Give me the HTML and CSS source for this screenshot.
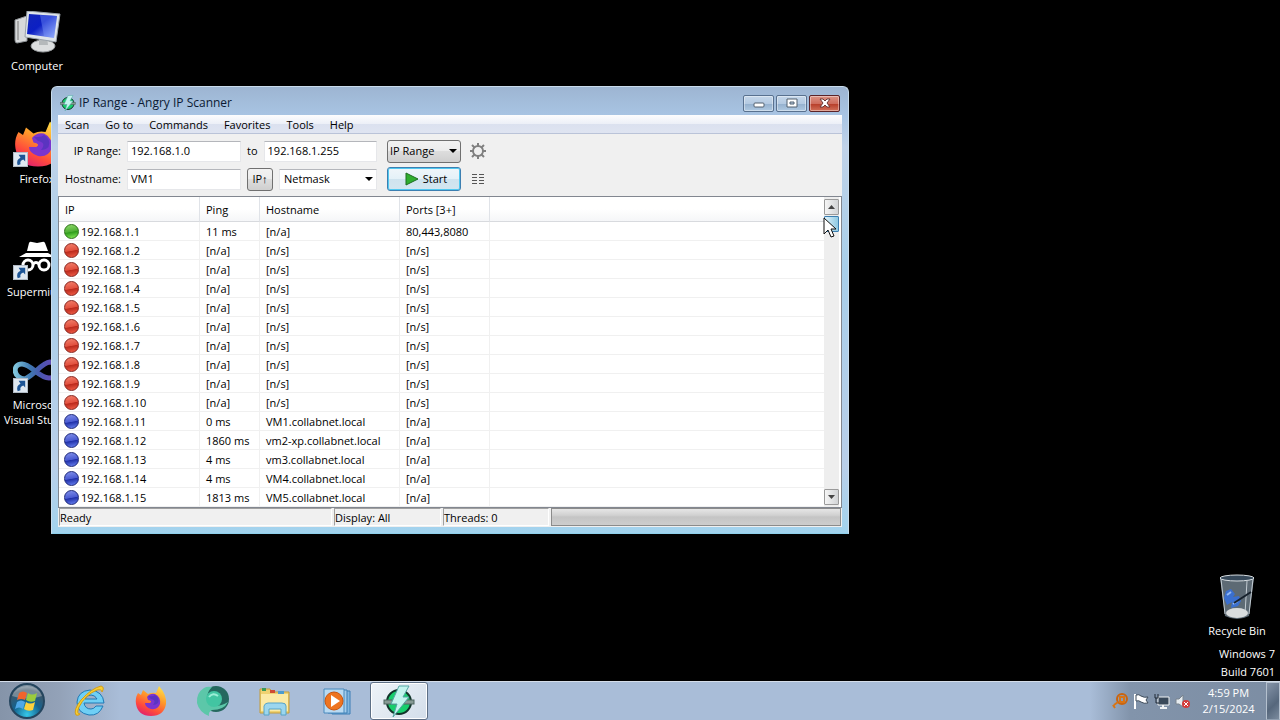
FILE: index.html
```
<!DOCTYPE html>
<html lang="en">
  <head>
    <meta charset="UTF-8" />
    <meta name="viewport" content="width=device-width, initial-scale=1.0" />
    <title>Desktop</title>
    <link rel="stylesheet" href="styles.css">
  </head>
  <body>
    <!-- shared icon shapes -->
    <svg class="defs" width="0" height="0">
      <defs>
        <linearGradient id="ffOuter" x1="0.8" y1="0" x2="0.3" y2="1">
          <stop offset="0" stop-color="#ffe14a" />
          <stop offset="0.4" stop-color="#ff9a2a" />
          <stop offset="0.75" stop-color="#ff4a3c" />
          <stop offset="1" stop-color="#e0206e" />
        </linearGradient>
        <linearGradient id="blueScreen" x1="0" y1="0" x2="1" y2="1">
          <stop offset="0" stop-color="#1226b8" />
          <stop offset="0.45" stop-color="#0b1fc4" />
          <stop offset="1" stop-color="#a8c0ff" />
        </linearGradient>
        <linearGradient id="infinity" x1="0" y1="0" x2="1" y2="0">
          <stop offset="0" stop-color="#7fc4dc" />
          <stop offset="0.35" stop-color="#3f78b0" />
          <stop offset="0.6" stop-color="#4a56b0" />
          <stop offset="1" stop-color="#7048b8" />
        </linearGradient>
        <radialGradient id="orb" cx="0.5" cy="0.9" r="0.9">
          <stop offset="0" stop-color="#35c8e8" />
          <stop offset="0.45" stop-color="#14628e" />
          <stop offset="0.8" stop-color="#3f5668" />
          <stop offset="1" stop-color="#8fa3b2" />
        </radialGradient>
        <symbol id="firefox" viewBox="0 0 32 32">
          <path d="M3 8 L6 10 L8 5 L13 9 Q17 7 21 8 L24 1 Q32 10 31 19 Q29 31 16 31 Q3 31 1 19 Q0 13 3 8z" fill="url(#ffOuter)" />
          <path d="M12 12 Q15 8 20 9 Q26 12 25 19 Q23 25 16 24 Q10 22 10 18 L15 18 Q18 16 13 15z" fill="#7a35cf" />
          <path d="M13 11 Q18 12 20 10 Q25 13 23 18 Q21 20 18 20 Q22 15 16 14z" fill="#5a34c0" />
        </symbol>
        <symbol id="shortcut" viewBox="0 0 16 16">
          <rect x="0.5" y="0.5" width="15" height="15" fill="#dfe8f1" stroke="#b5bec9" />
          <path d="M5 14 Q3 8 8 6 L6 3 L13 3 L13 10 L11 8 Q7 9 8 13z" fill="#1d5596" />
        </symbol>
        <symbol id="angry" viewBox="0 0 32 32">
          <circle cx="16" cy="17" r="12" fill="#17cf6c" stroke="#12342a" stroke-width="2" />
          <rect x="1" y="15" width="30" height="4" fill="#879a94" stroke="#4e6660" stroke-width="1" />
          <path d="M16 1 L26 1 L20 12 L26 12 L10 32 L14 19 L8 19z" fill="#c3f4ee" stroke="#55a7a4" stroke-width="1" />
        </symbol>
      </defs>
    </svg>

    <main class="desktop">
      <a href="#" class="shortcut computer">
        <svg width="48" height="44" viewBox="0 0 48 44">
          <path d="M2 9 L14 5 V30 L4 32 Q2 32 2 29z" fill="#d7d9da" stroke="#8e9296" />
          <path d="M5 10 V29" stroke="#777" />
          <ellipse cx="30" cy="35" rx="12" ry="6" fill="#dcdedf" stroke="#989c9f" />
          <path d="M26 25 H34 L35 34 H26z" fill="#b5b9bb" />
          <path d="M14 0 L47 3 L43 31 L12 26z" fill="#dfe5ea" stroke="#9aa2aa" />
          <path d="M16 3 L44 5 L41 27 L14 23z" fill="url(#blueScreen)" />
          <path d="M27 4 L44 5 L41 27 L31 25z" fill="#7c9cff" opacity="0.4" />
        </svg>
        <span>Computer</span>
      </a>
      <a href="#" class="shortcut firefox">
        <svg width="48" height="48" viewBox="0 0 48 48">
          <use href="#firefox" x="1" y="0" width="48" height="48" />
          <use href="#shortcut" x="0" y="32" width="15" height="15" />
        </svg>
        <span>Firefox</span>
      </a>
      <a href="#" class="shortcut supermium">
        <svg width="48" height="48" viewBox="0 0 48 48">
          <path d="M16 10 Q17 8 19 9 L24 10 L29 9 Q31 8 32 10 L35 18 H14z" fill="#fff" />
          <path d="M6 24 L13 20 H35 L42 24z" fill="#fff" />
          <circle cx="15" cy="32" r="5" fill="none" stroke="#fff" stroke-width="3" />
          <circle cx="31" cy="32" r="5" fill="none" stroke="#fff" stroke-width="3" />
          <path d="M20 31 Q23 28 26 31" fill="none" stroke="#fff" stroke-width="3" />
          <use href="#shortcut" x="0" y="32" width="15" height="15" />
        </svg>
        <span>Supermium</span>
      </a>
      <a href="#" class="shortcut studio">
        <svg width="48" height="48" viewBox="0 0 48 48">
          <path d="M12 33 C0 32 -1 18 9 18 C18 18 26 32 36 32 C48 32 48 16 37 16 C28 17 23 28 12 33z" fill="none" stroke="url(#infinity)" stroke-width="5" />
          <use href="#shortcut" x="0" y="32" width="15" height="15" />
        </svg>
        <span>Microsoft Visual Studio</span>
      </a>

      <a href="#" class="shortcut recycle">
        <svg width="38" height="46" viewBox="0 0 38 46">
          <path d="M2 4 L7 42 Q19 48 31 42 L36 4z" fill="#6d7c88" opacity="0.85" />
          <path d="M3 5 L7 40 M35 5 L31 40 M29 7 L27 40" stroke="#c3ccd3" stroke-width="1" />
          <ellipse cx="19" cy="4" rx="17" ry="3" fill="#37495a" stroke="#d6dce0" stroke-width="1" />
          <path d="M6 24 L8 17 L13 15 L17 20 L15 23 L21 22 L23 27 L20 32 L13 34 L14 28 L9 31z" fill="#3a6fcf" />
          <path d="M9 21 L13 18 M15 30 L20 27" stroke="#91b8f6" stroke-width="2" />
          <path d="M16 29 L33 18" stroke="#17212c" stroke-width="2" />
          <ellipse cx="19" cy="39" rx="11" ry="5" fill="#d9dcdd" />
        </svg>
        <span>Recycle Bin</span>
      </a>
      <p class="build">Windows 7<br>Build 7601</p>

      <section class="window">
        <header class="titlebar">
          <svg width="16" height="16"><use href="#angry" width="16" height="16" /></svg>
          <h1>IP Range - Angry IP Scanner</h1>
          <div class="controls">
            <button aria-label="Minimize">
              <svg width="12" height="10"><rect x="1" y="5" width="10" height="4" rx="1" fill="#fff" stroke="#52606f" /></svg>
            </button>
            <button aria-label="Maximize">
              <svg width="12" height="10"><path d="M1 1 H11 V9 H1z M4 4 V6 H8 V4z" fill="#fff" fill-rule="evenodd" stroke="#52606f" /></svg>
            </button>
            <button class="close" aria-label="Close">
              <svg width="12" height="10"><path d="M1 1 H4 L6 3 L8 1 H11 L8 5 L11 9 H8 L6 7 L4 9 H1 L4 5z" fill="#fff" stroke="#6b3a38" /></svg>
            </button>
          </div>
        </header>

        <div class="client">
          <nav class="menubar">
            <a href="#">Scan</a>
            <a href="#">Go to</a>
            <a href="#">Commands</a>
            <a href="#">Favorites</a>
            <a href="#">Tools</a>
            <a href="#">Help</a>
          </nav>

          <form class="toolbar">
            <label for="start-ip">IP Range:</label>
            <input id="start-ip" type="text" value="192.168.1.0">
            <div class="group">
              <label for="end-ip">to</label>
              <input id="end-ip" type="text" value="192.168.1.255">
            </div>
            <div class="select feeder">
              <select aria-label="Feeder"><option>IP Range</option></select>
            </div>
            <button type="button" class="tool" aria-label="Preferences">
              <svg width="18" height="18" viewBox="0 0 18 18">
                <g stroke="#808080" fill="none">
                  <circle cx="9" cy="9" r="5" stroke-width="2" />
                  <path d="M9 1 V4 M9 14 V17 M1 9 H4 M14 9 H17 M3 3 L6 6 M12 12 L15 15 M15 3 L12 6 M3 15 L6 12" stroke-width="2" />
                </g>
              </svg>
            </button>

            <label for="hostname">Hostname:</label>
            <input id="hostname" type="text" value="VM1">
            <div class="group">
              <button type="button" class="ip-up">IP↑</button>
              <div class="select netmask">
                <select aria-label="Netmask"><option>Netmask</option></select>
              </div>
            </div>
            <button type="button" class="start">
              <svg width="14" height="14" viewBox="0 0 14 14"><path d="M1 1 L13 7 L1 13z" fill="#2fae2f" stroke="#1d6e22" /></svg>
              Start
            </button>
            <button type="button" class="tool" aria-label="Select fetchers">
              <svg width="12" height="12" viewBox="0 0 12 12">
                <path d="M0 1.5 H5 M7 1.5 H12 M0 4.5 H5 M7 4.5 H12 M0 7.5 H5 M7 7.5 H12 M0 10.5 H5 M7 10.5 H12" stroke="#555" />
              </svg>
            </button>
          </form>

          <div class="results">
            <table>
              <colgroup>
                <col class="col-ip"><col class="col-ping"><col class="col-host"><col class="col-ports"><col>
              </colgroup>
              <thead>
                <tr><th>IP</th><th>Ping</th><th>Hostname</th><th>Ports [3+]</th><th></th></tr>
              </thead>
              <tbody>
                <tr><td><i class="dot green"></i>192.168.1.1</td><td>11 ms</td><td>[n/a]</td><td>80,443,8080</td><td></td></tr>
                <tr><td><i class="dot red"></i>192.168.1.2</td><td>[n/a]</td><td>[n/s]</td><td>[n/s]</td><td></td></tr>
                <tr><td><i class="dot red"></i>192.168.1.3</td><td>[n/a]</td><td>[n/s]</td><td>[n/s]</td><td></td></tr>
                <tr><td><i class="dot red"></i>192.168.1.4</td><td>[n/a]</td><td>[n/s]</td><td>[n/s]</td><td></td></tr>
                <tr><td><i class="dot red"></i>192.168.1.5</td><td>[n/a]</td><td>[n/s]</td><td>[n/s]</td><td></td></tr>
                <tr><td><i class="dot red"></i>192.168.1.6</td><td>[n/a]</td><td>[n/s]</td><td>[n/s]</td><td></td></tr>
                <tr><td><i class="dot red"></i>192.168.1.7</td><td>[n/a]</td><td>[n/s]</td><td>[n/s]</td><td></td></tr>
                <tr><td><i class="dot red"></i>192.168.1.8</td><td>[n/a]</td><td>[n/s]</td><td>[n/s]</td><td></td></tr>
                <tr><td><i class="dot red"></i>192.168.1.9</td><td>[n/a]</td><td>[n/s]</td><td>[n/s]</td><td></td></tr>
                <tr><td><i class="dot red"></i>192.168.1.10</td><td>[n/a]</td><td>[n/s]</td><td>[n/s]</td><td></td></tr>
                <tr><td><i class="dot blue"></i>192.168.1.11</td><td>0 ms</td><td>VM1.collabnet.local</td><td>[n/a]</td><td></td></tr>
                <tr><td><i class="dot blue"></i>192.168.1.12</td><td>1860 ms</td><td>vm2-xp.collabnet.local</td><td>[n/a]</td><td></td></tr>
                <tr><td><i class="dot blue"></i>192.168.1.13</td><td>4 ms</td><td>vm3.collabnet.local</td><td>[n/a]</td><td></td></tr>
                <tr><td><i class="dot blue"></i>192.168.1.14</td><td>4 ms</td><td>VM4.collabnet.local</td><td>[n/a]</td><td></td></tr>
                <tr><td><i class="dot blue"></i>192.168.1.15</td><td>1813 ms</td><td>VM5.collabnet.local</td><td>[n/a]</td><td></td></tr>
              </tbody>
            </table>
            <div class="scrollbar">
              <button aria-label="Scroll up"><svg width="7" height="4"><path d="M0 4 L3.5 0 L7 4z" fill="#444" /></svg></button>
              <div class="thumb"></div>
              <button aria-label="Scroll down"><svg width="7" height="4"><path d="M0 0 L3.5 4 L7 0z" fill="#444" /></svg></button>
            </div>
          </div>

          <footer class="statusbar">
            <span class="ready">Ready</span>
            <span class="display">Display: All</span>
            <span class="threads">Threads: 0</span>
            <div class="progress"></div>
          </footer>
        </div>
      </section>

      <svg class="pointer" width="14" height="21" viewBox="0 0 14 21">
        <path d="M1 1 V17 L5 13 L8 20 L11 19 L8 12 H13z" fill="#fff" stroke="#111" />
      </svg>
    </main>

    <footer class="taskbar">
      <button class="orb" aria-label="Start menu">
        <svg width="38" height="38" viewBox="0 0 38 38">
          <circle cx="19" cy="19" r="17" fill="url(#orb)" stroke="#24455e" stroke-width="2" />
          <path d="M4 14 Q8 4 19 4 Q30 4 34 14 Q19 19 4 14z" fill="#fff" opacity="0.3" />
          <path d="M11 11 Q15 8 19 11 L17 18 Q13 16 9 18z" fill="#f0642c" />
          <path d="M20 11 Q24 14 29 11 L27 19 Q22 21 18 18z" fill="#9bcb3c" />
          <path d="M9 20 Q13 17 17 20 L15 27 Q11 24 7 27z" fill="#4fa8e8" />
          <path d="M18 20 Q22 23 27 20 L25 28 Q20 30 16 27z" fill="#fcd13c" />
        </svg>
      </button>
      <button class="task" aria-label="Internet Explorer">
        <svg width="32" height="32" viewBox="0 0 32 32">
          <path d="M30 21 Q26 31 16 30 Q4 28 4 17 Q5 6 17 5 Q30 6 31 18 H11 Q12 24 18 24 Q21 24 23 21z M12 14 H24 Q22 10 18 10 Q13 10 12 14z" fill="#6fcff5" fill-rule="evenodd" stroke="#2079b5" />
          <path d="M3 30 Q0 25 8 15 Q19 3 28 1 Q32 2 29 7 Q29 4 24 5 Q12 10 6 22 Q3 29 7 29 Q5 31 3 30z" fill="#f7ce33" stroke="#d39e17" stroke-width="1" />
        </svg>
      </button>
      <button class="task" aria-label="Firefox">
        <svg width="32" height="32"><use href="#firefox" width="32" height="32" /></svg>
      </button>
      <button class="task" aria-label="Supermium">
        <svg width="34" height="32" viewBox="0 0 34 32">
          <ellipse cx="20" cy="14" rx="13" ry="13" fill="#25685f" />
          <path d="M8 3 Q0 8 1 18 Q3 27 13 31 Q12 27 16 25 Q28 25 32 17 Q26 21 18 21 Q10 19 11 13 Q11 7 16 2 Q11 1 8 3z" fill="#5cc7a9" />
          <circle cx="18" cy="14" r="8" fill="#42c5a2" />
          <path d="M13 12 Q17 7 22 11" stroke="#9beed6" stroke-width="2" fill="none" />
        </svg>
      </button>
      <button class="task" aria-label="Windows Explorer">
        <svg width="34" height="32" viewBox="0 0 34 32">
          <path d="M2 4 H12 L14 7 H31 V28 H2z" fill="#efd271" stroke="#c29b3b" />
          <path d="M3 9 H30 V26 H3z" fill="#fbeaa5" />
          <path d="M4 3 H8 V6 H4z" fill="#3c9a58" />
          <path d="M12 5 H17 V8 H12z" fill="#cf4a33" />
          <path d="M20 6 H26 V9 H20z" fill="#4b9bd0" />
          <path d="M6 30 V21 Q7 18 10 18 H24 Q28 18 28 21 V30 H23 V24 H11 V30z" fill="#9bd6ee" stroke="#57a4c8" />
        </svg>
      </button>
      <button class="task" aria-label="Windows Media Player">
        <svg width="28" height="28" viewBox="0 0 28 28">
          <path d="M9 4 H27 V27 H9z" fill="#82b6df" stroke="#3d7eb5" />
          <path d="M5 3 H24 V26 H5z" fill="#a3cceb" stroke="#3d7eb5" />
          <path d="M1 2 H21 V26 H1z" fill="#b9daf2" stroke="#4889bd" />
          <circle cx="11" cy="14" r="9" fill="#ee7420" stroke="#c9550f" />
          <path d="M8 8 L17 14 L8 20z" fill="#fff" />
        </svg>
      </button>
      <button class="task active" aria-label="Angry IP Scanner">
        <svg width="32" height="32"><use href="#angry" width="32" height="32" /></svg>
      </button>

      <div class="tray">
        <svg width="16" height="16" viewBox="0 0 16 16">
          <circle cx="10" cy="6" r="5" fill="none" stroke="#c9640f" stroke-width="2" />
          <path d="M6 9 L2 12 M1 12 L3 15 M8 4 H12 V9 H8z" stroke="#d97414" stroke-width="2" fill="none" />
        </svg>
        <svg width="16" height="16" viewBox="0 0 16 16">
          <path d="M2 1 V16" stroke="#fff" stroke-width="2" />
          <path d="M3 2 Q6 1 8 3 Q11 5 15 4 L13 7 L15 10 Q11 11 8 9 Q6 7 3 8z" fill="#fff" stroke="#3e4c5b" stroke-width="1" />
        </svg>
        <svg width="16" height="16" viewBox="0 0 16 16">
          <path d="M4 4 H15 V12 H4z" fill="#39495a" stroke="#f0f3f5" />
          <path d="M6 15 H13 M9 12 V15" stroke="#f0f3f5" stroke-width="2" />
          <path d="M1 1 V5 H4 V1 M2 5 V10 H5" fill="none" stroke="#1e2935" />
        </svg>
        <svg width="16" height="16" viewBox="0 0 16 16">
          <path d="M1 6 H4 L8 2 V14 L4 11 H1z" fill="#e6ebef" stroke="#79838d" />
          <circle cx="11" cy="11" r="4" fill="#d43c3c" />
          <path d="M9 9 L13 13 M13 9 L9 13" stroke="#fff" />
        </svg>
      </div>
      <p class="clock">4:59 PM<br>2/15/2024</p>
      <button class="peek" aria-label="Show desktop"></button>
    </footer>
  </body>
</html>
```
FILE: styles.css
```
* {
  margin: 0;
  padding: 0;
  box-sizing: border-box;
}

body {
  display: flex;
  flex-direction: column;
  min-height: 100vh;
  background: #000;
  color: #000;
  font-family: "Open Sans", "Noto Sans", sans-serif;
  font-size: 11px;
  line-height: 16px;
}

button,
input,
select {
  font: inherit;
  color: inherit;
}

a {
  color: inherit;
  text-decoration: none;
}

svg {
  display: block;
  flex-shrink: 0;
}

.defs {
  position: absolute;
}

.desktop {
  position: relative;
  flex: 1;
  overflow: hidden;
}

/* desktop icons */
.shortcut {
  position: absolute;
  left: 0;
  width: 74px;
  display: flex;
  flex-direction: column;
  align-items: center;
  gap: 3px;
  color: #fff;
  text-align: center;
  line-height: 15px;
}

.computer {
  top: 11px;
}

.firefox {
  top: 120px;
}

.supermium {
  top: 233px;
}

.studio {
  top: 346px;
}

.recycle {
  top: 574px;
  left: auto;
  right: 6px;
}

.build {
  position: absolute;
  right: 5px;
  bottom: 0;
  color: #fff;
  text-align: right;
  line-height: 18px;
}

/* window */
.window {
  position: absolute;
  left: 51px;
  top: 86px;
  width: 798px;
  padding: 0 6px 6px;
  border: 1px solid #c9dcec;
  border-bottom-color: #8fd0ec;
  border-radius: 6px 6px 0 0;
  background: linear-gradient(#9db5d2, #a9c5e4 30px, #c0d2e8 60px, #a8cfea 180px, #b9cfe9 380px, #a2d3ee);
}

.titlebar {
  display: flex;
  align-items: center;
  gap: 3px;
  height: 28px;
  padding: 4px 2px 0;
  color: #0b1a33;
}

.titlebar h1 {
  flex: 1;
  font-size: 12px;
  font-weight: normal;
}

.controls {
  display: flex;
  gap: 2px;
}

.controls button {
  display: flex;
  align-items: center;
  justify-content: center;
  width: 31px;
  height: 17px;
  border: 1px solid #59718f;
  border-radius: 2px;
  background: linear-gradient(#c5d7ea, #b4cae2 50%, #93afcd 50%, #afc9e2);
  box-shadow: inset 0 0 0 1px rgba(255, 255, 255, 0.4);
}

.controls .close {
  border-color: #5b2328;
  background: linear-gradient(#dc9385, #cf6d5d 50%, #b53a26 50%, #d2715a);
}

.client {
  background: #f0f0f0;
}

.menubar {
  display: flex;
  gap: 16px;
  height: 19px;
  padding: 0 7px;
  line-height: 19px;
  border-bottom: 1px solid #bac3d8;
  background: linear-gradient(#fdfdfe, #eceff7 50%, #dbe1ef 50%, #dfe4f1);
}

.toolbar {
  display: grid;
  grid-template-columns: 58px 114px 130px 78px 22px;
  grid-template-rows: 24px 24px;
  gap: 4px 6px;
  align-items: center;
  padding: 5px;
}

.toolbar > label {
  text-align: right;
}

.toolbar input,
.netmask select {
  width: 100%;
  height: 21px;
  padding: 0 4px 1px;
  border: 1px solid #e6e7ea;
  border-top-color: #b4b6bb;
  background: #fff;
}

.toolbar input {
  padding-left: 3px;
}

.group {
  display: flex;
  align-items: center;
  gap: 6px;
}

.group .select,
.group input {
  flex: 1;
  min-width: 0;
}

.select {
  position: relative;
}

.select select {
  appearance: none;
  display: block;
  width: 100%;
}

.select::after {
  content: "";
  position: absolute;
  right: 4px;
  top: 50%;
  border: 4px solid transparent;
  border-top-color: #000;
  border-bottom: 0;
  transform: translateY(-50%);
  pointer-events: none;
}

.feeder {
  margin-left: 4px;
}

.feeder select,
.ip-up {
  height: 23px;
  border: 1px solid #707070;
  border-radius: 3px;
  background: linear-gradient(#f2f2f2, #ebebeb 50%, #dddddd 50%, #cfcfcf);
}

.feeder select {
  padding: 0 2px;
}

.ip-up {
  width: 26px;
}

.start {
  display: flex;
  align-items: center;
  justify-content: center;
  gap: 4px;
  height: 24px;
  margin-left: 4px;
  padding-left: 4px;
  border: 1px solid #3c7fb1;
  border-radius: 3px;
  background: linear-gradient(#f0f6fa, #e4f1f8 50%, #cfe3ee 50%, #d3e6f0);
  box-shadow: inset 0 0 0 1px #50c8f0;
}

.tool {
  display: flex;
  align-items: center;
  justify-content: center;
  height: 22px;
  border: 0;
  background: none;
}

/* results list */
.results {
  display: flex;
  border: 1px solid #828790;
  background: #fff;
}

table {
  flex: 1;
  table-layout: fixed;
  border-collapse: separate;
  border-spacing: 0;
}

.col-ip {
  width: 141px;
}

.col-ping {
  width: 60px;
}

.col-host {
  width: 140px;
}

.col-ports {
  width: 90px;
}

th,
td {
  padding: 2px 0 0 6px;
  border-right: 1px solid #f0f0f0;
  line-height: 16px;
  text-align: left;
  white-space: nowrap;
}

th {
  height: 25px;
  border-right-color: #e0e3e8;
  border-bottom: 1px solid #d8dade;
  background: linear-gradient(#fff 50%, #f5f6f8);
  font-weight: normal;
}

td {
  height: 19px;
  border-bottom: 1px solid #f0f0f0;
}

th:last-child,
td:last-child {
  border-right: 0;
}

.dot {
  display: inline-block;
  width: 15px;
  height: 15px;
  margin-right: 2px;
  margin-left: -1px;
  border: 1px solid;
  border-radius: 50%;
  vertical-align: top;
}

.green {
  border-color: #2c7018;
  background: linear-gradient(170deg, #8fdc6c, #4fae34 50%, #2f9c1c 55%, #8cf05c);
}

.red {
  border-color: #86251e;
  background: linear-gradient(170deg, #f2806c, #e2503e 50%, #bb2a1c 55%, #f4604a);
}

.blue {
  border-color: #1d2878;
  background: linear-gradient(170deg, #8291ea, #4a5bd2 50%, #2030a8 55%, #6c86f6);
}

.scrollbar {
  display: flex;
  flex-direction: column;
  gap: 1px;
  width: 15px;
  margin-right: 2px;
  padding: 2px 0;
  background: #eeeeee;
}

.scrollbar button,
.thumb {
  display: flex;
  align-items: center;
  justify-content: center;
  height: 16px;
  border: 1px solid #9a9a9a;
  border-radius: 1px;
  background: linear-gradient(90deg, #f5f5f5, #d2d4d6);
}

.scrollbar button:last-child {
  margin-top: auto;
}

.scrollbar .thumb {
  border-color: #3c7fb1;
  background: linear-gradient(90deg, #e0f3fb, #8fc9e2);
}

/* status bar */
.statusbar {
  display: flex;
  gap: 2px;
  padding: 0 1px 1px;
  line-height: 17px;
}

.statusbar span,
.progress {
  height: 18px;
  border: 1px solid #fff;
  border-top-color: #a0a0a0;
  border-left-color: #a0a0a0;
}

.ready {
  width: 273px;
}

.display {
  width: 107px;
}

.threads {
  width: 106px;
}

.statusbar .progress {
  flex: 1;
  border-color: #8b8b8b;
  background: linear-gradient(#e6e6e6, #d0d0d0 40%, #c4c4c4 50%, #cdcdcd);
}

.pointer {
  position: absolute;
  left: 823px;
  top: 217px;
}

/* taskbar */
.taskbar {
  display: flex;
  align-items: stretch;
  height: 39px;
  border-top: 1px solid #d5deea;
  background: linear-gradient(90deg, #8594a9, #93a2b8 60px, #a9bdd8 120px, #a9bdd8 1090px, #8294ab calc(100% - 150px), #7c8da3);
}

.taskbar button {
  display: flex;
  align-items: center;
  justify-content: center;
  border: 0;
  background: none;
}

.orb {
  width: 54px;
  margin-right: 6px;
}

.taskbar .task {
  width: 58px;
  margin-right: 4px;
}

.taskbar .active {
  border: 1px solid #5d6f85;
  border-radius: 3px;
  background: linear-gradient(135deg, #eef3f8, #d3deea);
  box-shadow: inset 0 0 0 1px #fff;
}

.tray {
  display: flex;
  align-items: center;
  gap: 5px;
  margin-left: auto;
}

.clock {
  width: 75px;
  padding-top: 3px;
  color: #fff;
  text-align: center;
}

.taskbar .peek {
  width: 14px;
  border: 1px solid #b4c0ce;
  border-bottom-color: #8f9eb0;
  background: linear-gradient(135deg, #8594a8, #56677c 60%, #7b8b9e);
}
```
